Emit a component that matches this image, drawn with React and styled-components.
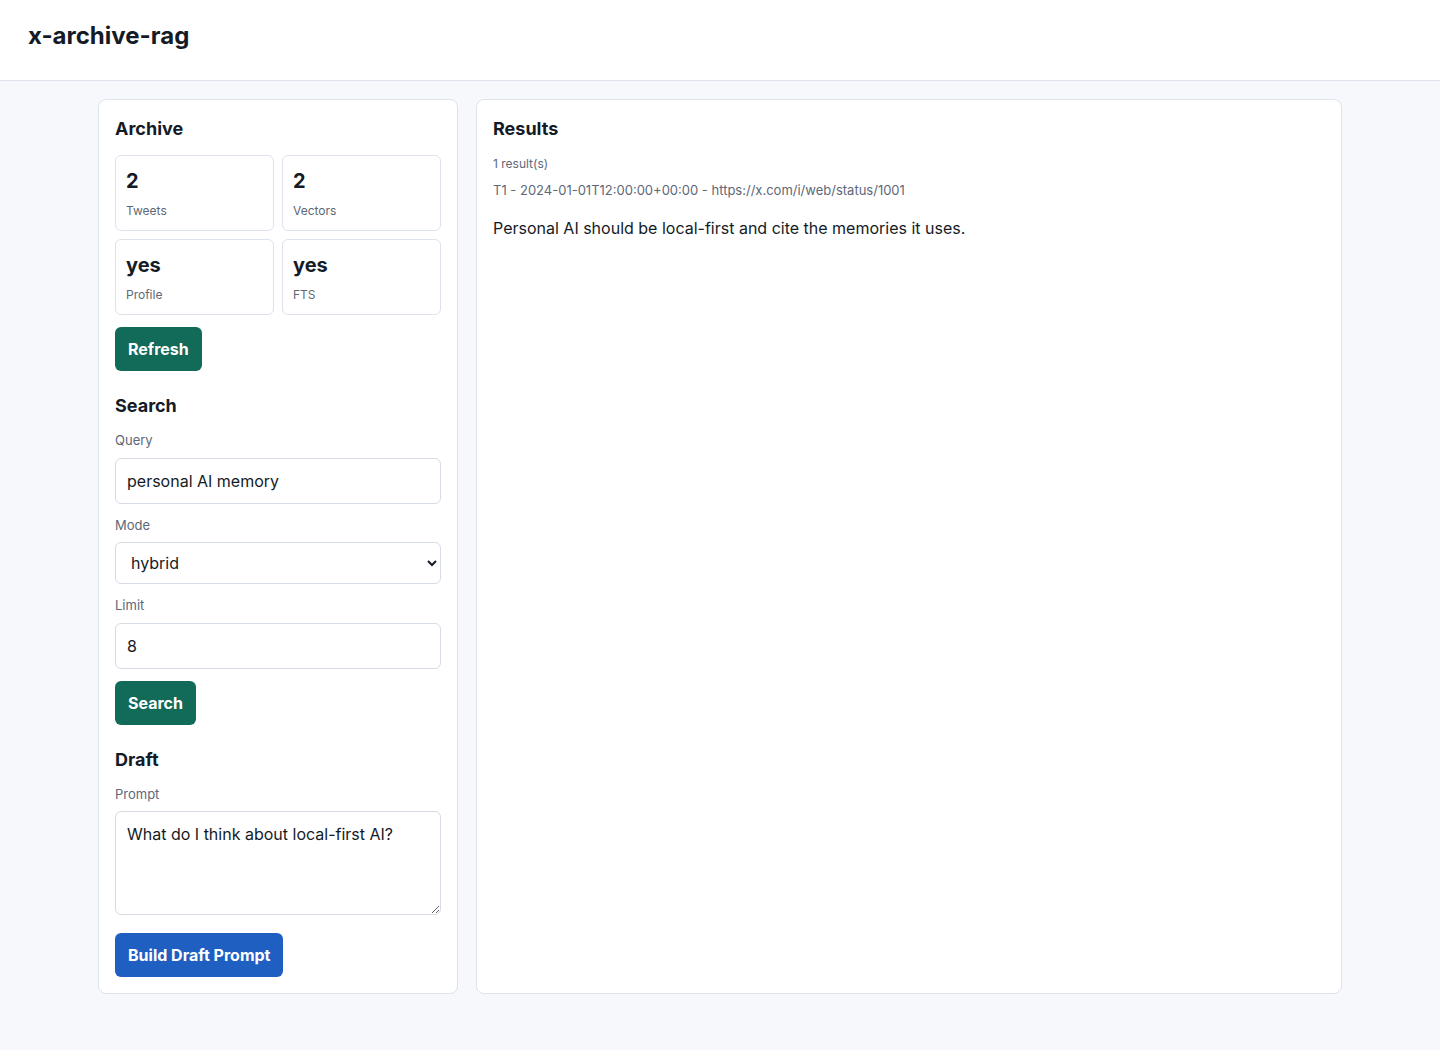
import React from "react";
import styled, { createGlobalStyle } from "styled-components";

const Global = createGlobalStyle`
  body { margin: 0; background: #f6f8fb; font-family: Inter, "Noto Sans", sans-serif; color: #141b26; }
  * { box-sizing: border-box; }
`;
const Header = styled.header`
  height: 81px; background: #fff; border-bottom: 1px solid #dde3ec;
  display: flex; align-items: center; padding: 0 28px;
`;
const Title = styled.h1`margin: 0; font-size: 24px; font-weight: 700; line-height: 32px; margin-top: -8px;`;
const Main = styled.main`
  width: 1244px; margin: 18px auto 0; display: grid; grid-template-columns: 360px 866px; gap: 18px; align-items: stretch;
`;
const Panel = styled.section`
  background: #fff; border: 1px solid #dde3ec; border-radius: 8px; padding: 15px 16px 16px;
  display: flex; flex-direction: column; align-items: flex-start;
`;
const H2 = styled.h2`font-size: 18px; font-weight: 700; line-height: 28px; margin: ${p => p.$top || 0}px 0 12px;`;
const Stats = styled.div`display: grid; grid-template-columns: 1fr 1fr; gap: 8px; width: 100%; margin-bottom: 12px;`;
const Stat = styled.div`border: 1px solid #dde3ec; border-radius: 6px; height: 76px; padding: 12px 10px;`;
const Val = styled.div`font-size: 20px; font-weight: 700; line-height: 26px;`;
const SLabel = styled.div`font-size: 12px; color: #5d6878; margin-top: 9px; line-height: 16px;`;
const Button = styled.button`
  border: 0; border-radius: 6px; height: 44px; padding: 0 13px; color: #fff; font-family: inherit;
  font-size: 16px; font-weight: 700; background: ${p => p.$blue ? "#1f5fc2" : "#126a58"}; margin-top: ${p => p.$top || 0}px;
`;
const Label = styled.label`font-size: 13px; line-height: 17px; color: #5d6878; margin: ${p => p.$top || 0}px 0 ${p => p.$bottom || 9}px;`;
const Input = styled.input`
  width: 100%; height: 46px; border: 1px solid #d6dce5; border-radius: 6px; padding: 0 11px;
  font-family: inherit; font-size: 16px; color: #141b26;
`;
const Select = styled.select`
  width: 100%; height: 42px; border: 1px solid #d6dce5; border-radius: 6px; padding: 0 11px;
  font-family: inherit; font-size: 16px; color: #141b26; background: #fff;
`;
const Area = styled.textarea`
  width: 100%; height: 104px; border: 1px solid #d6dce5; border-radius: 6px; padding: 12px 11px;
  font-family: inherit; font-size: 16px; color: #141b26; display: block; resize: vertical;
`;
const Count = styled.div`font-size: 12px; color: #5d6878; line-height: 16px; margin-top: 1px;`;
const Meta = styled.div`font-size: 13px; color: #5d6878; line-height: 16px; margin-top: 10px;`;
const Text = styled.p`font-size: 16px; line-height: 24px; margin: 18px 0 0;`;

export default function App() {
  return (
    <>
      <Global />
      <Header><Title>x-archive-rag</Title></Header>
      <Main>
        <Panel>
          <H2>Archive</H2>
          <Stats>
            <Stat><Val>2</Val><SLabel>Tweets</SLabel></Stat>
            <Stat><Val>2</Val><SLabel>Vectors</SLabel></Stat>
            <Stat><Val>yes</Val><SLabel>Profile</SLabel></Stat>
            <Stat><Val>yes</Val><SLabel>FTS</SLabel></Stat>
          </Stats>
          <Button>Refresh</Button>
          <H2 $top={21}>Search</H2>
          <Label>Query</Label>
          <Input defaultValue="personal AI memory" />
          <Label $top={13} $bottom={8}>Mode</Label>
          <Select defaultValue="hybrid"><option>hybrid</option><option>semantic</option><option>keyword</option></Select>
          <Label $top={13}>Limit</Label>
          <Input defaultValue="8" />
          <Button $top={12}>Search</Button>
          <H2 $top={21}>Draft</H2>
          <Label $bottom={8}>Prompt</Label>
          <Area defaultValue="What do I think about local-first AI?" />
          <Button $blue $top={18}>Build Draft Prompt</Button>
        </Panel>
        <Panel>
          <H2>Results</H2>
          <Count>1 result(s)</Count>
          <Meta>T1 - 2024-01-01T12:00:00+00:00 - https://x.com/i/web/status/1001</Meta>
          <Text>Personal AI should be local-first and cite the memories it uses.</Text>
        </Panel>
      </Main>
    </>
  );
}
